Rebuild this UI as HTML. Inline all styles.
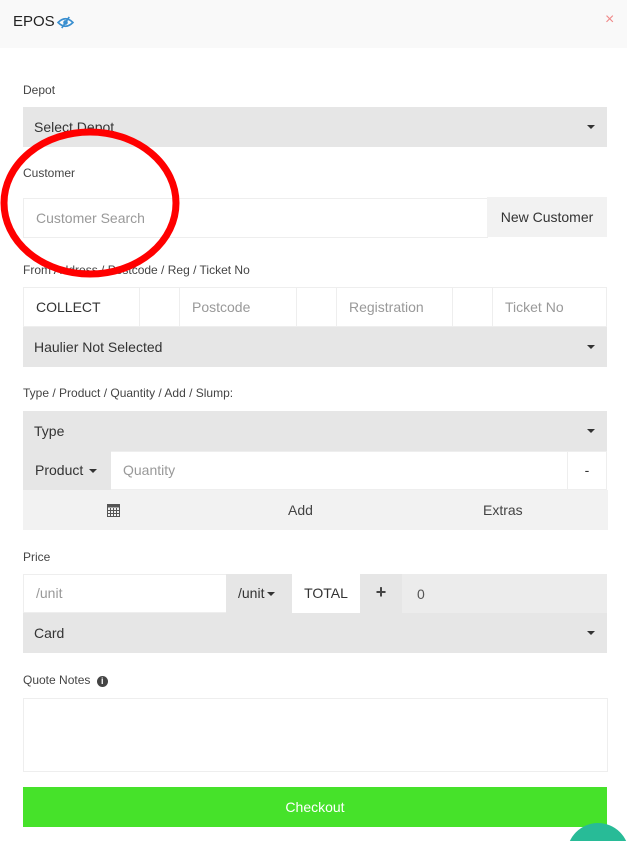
<!DOCTYPE html>
<html style="overflow:hidden;width:627px;height:841px"><head><meta charset="utf-8"><style>
*{box-sizing:border-box;margin:0;padding:0}
body{width:627px;height:841px;overflow:hidden;background:#fff;font-family:"Liberation Sans",sans-serif;color:#333;position:relative}
.a{position:absolute}
.lbl{position:absolute;left:23px;font-size:12px;color:#444}
.sel{position:absolute;left:23px;width:584px;height:40px;background:#e6e6e6;font-size:14px;line-height:40px;padding-left:11px;color:#333}
.car{position:absolute;right:12px;top:18px;width:0;height:0;border-left:4px solid transparent;border-right:4px solid transparent;border-top:4px solid #333}
.cell{position:absolute;height:40px;border:1px solid #eee;background:#fff;font-size:14px;line-height:38px;padding-left:12px;color:#999}
</style></head><body>
<div class="a" style="left:0;top:0;width:627px;height:48px;background:#f9f9f9"></div>
<div class="a" style="left:13px;top:13px;font-size:15px;color:#222">EPOS</div>
<svg class="a" style="left:57px;top:16px" width="17" height="13" viewBox="0 0 18 14"><path d="M1 7 Q9 -1 17 7 Q9 15 1 7Z" fill="none" stroke="#3a8fd0" stroke-width="1.8"/><circle cx="9" cy="7" r="2.5" fill="#3a8fd0"/><line x1="5" y1="13" x2="13" y2="1" stroke="#3a8fd0" stroke-width="1.8"/></svg>
<div class="a" style="left:605px;top:11px;font-size:16px;color:#f08a8a">×</div>

<div class="lbl" style="top:83px">Depot</div>
<div class="sel" style="top:107px">Select Depot<div class="car"></div></div>

<div class="lbl" style="top:166px">Customer</div>
<div class="cell" style="left:23px;top:198px;width:465px;height:40px">Customer Search</div>
<div class="a" style="left:487px;top:197px;width:120px;height:40px;background:#f2f2f2;font-size:14px;line-height:40px;text-align:center;color:#333">New Customer</div>

<div class="lbl" style="top:263px">From Address / Postcode / Reg / Ticket No</div>
<div class="cell" style="left:23px;top:287px;width:117px;color:#333">COLLECT</div>
<div class="cell" style="left:139px;top:287px;width:41px"></div>
<div class="cell" style="left:179px;top:287px;width:118px">Postcode</div>
<div class="cell" style="left:296px;top:287px;width:41px"></div>
<div class="cell" style="left:336px;top:287px;width:117px">Registration</div>
<div class="cell" style="left:452px;top:287px;width:41px"></div>
<div class="cell" style="left:492px;top:287px;width:115px">Ticket No</div>
<div class="sel" style="top:327px">Haulier Not Selected<div class="car"></div></div>

<div class="lbl" style="top:386px">Type / Product / Quantity / Add / Slump:</div>
<div class="sel" style="top:411px">Type<div class="car"></div></div>
<div class="a" style="left:23px;top:451px;width:88px;height:39px;background:#e6e6e6;font-size:14px;line-height:39px;padding-left:12px">Product<span style="display:inline-block;margin-left:6px;vertical-align:middle;border-left:4px solid transparent;border-right:4px solid transparent;border-top:4px solid #333"></span></div>
<div class="cell" style="left:111px;top:451px;width:457px;height:39px;border-left:none;line-height:37px">Quantity</div>
<div class="cell" style="left:567px;top:451px;width:40px;height:39px;line-height:37px;padding:0;text-align:center;color:#333">-</div>
<div class="a" style="left:23px;top:490px;width:585px;height:40px;background:#f2f2f2;font-size:14px;line-height:40px;color:#444">
<svg class="a" style="left:84px;top:14px" width="13" height="13" viewBox="0 0 13 13"><rect x="0.5" y="0.5" width="12" height="12" fill="none" stroke="#555"/><rect x="0.5" y="0.5" width="12" height="3" fill="#555"/><path d="M0 6.5H13M0 9.5H13M3.5 4V13M6.5 4V13M9.5 4V13" stroke="#555"/></svg>
<span class="a" style="left:265px">Add</span><span class="a" style="left:460px">Extras</span></div>

<div class="lbl" style="top:550px">Price</div>
<div class="cell" style="left:23px;top:574px;width:204px;height:39px;line-height:37px">/unit</div>
<div class="a" style="left:226px;top:574px;width:66px;height:39px;background:#e6e6e6;font-size:14px;line-height:39px;padding-left:12px">/unit<span style="display:inline-block;margin-left:3px;vertical-align:middle;border-left:4px solid transparent;border-right:4px solid transparent;border-top:4px solid #333"></span></div>
<div class="a" style="left:292px;top:574px;width:68px;height:39px;background:#fff;font-size:14px;line-height:39px;text-align:center">TOTAL</div>
<div class="a" style="left:360px;top:574px;width:42px;height:39px;background:#e6e6e6;font-size:18px;font-weight:bold;line-height:37px;text-align:center;color:#444">+</div>
<div class="a" style="left:402px;top:574px;width:205px;height:39px;background:#ececec;font-size:14px;line-height:41px;padding-left:15px;color:#555">0</div>
<div class="sel" style="top:613px">Card<div class="car"></div></div>

<div class="lbl" style="top:673px">Quote Notes <span style="display:inline-block;width:11px;height:11px;border-radius:50%;background:#444;color:#fff;font-size:9px;line-height:11px;text-align:center;font-weight:bold;margin-left:3px">i</span></div>
<div class="a" style="left:23px;top:698px;width:585px;height:74px;border:1px solid #eee"></div>
<div class="a" style="left:23px;top:787px;width:584px;height:40px;background:#46e22a;color:#fff;font-size:14px;line-height:40px;text-align:center">Checkout</div>
<svg class="a" style="left:567px;top:823px" width="60" height="18"><circle cx="31" cy="31" r="31" fill="#28bb97"/></svg>

<svg class="a" style="left:0;top:125px" width="190" height="160"><ellipse cx="90" cy="78" rx="86" ry="71" fill="none" stroke="#f00" stroke-width="7"/></svg>
</body></html>
